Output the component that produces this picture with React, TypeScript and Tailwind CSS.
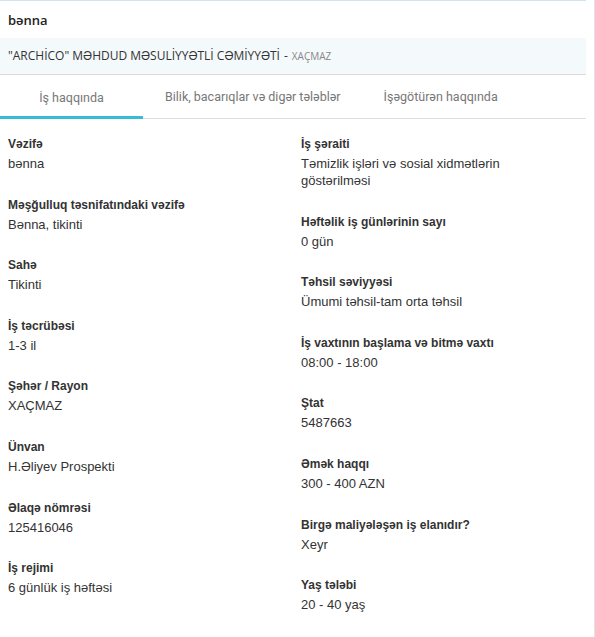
import React from 'react';

const left = [
  ['Vəzifə', 'bənna'],
  ['Məşğulluq təsnifatındaki vəzifə', 'Bənna, tikinti'],
  ['Sahə', 'Tikinti'],
  ['İş təcrübəsi', '1-3 il'],
  ['Şəhər / Rayon', 'XAÇMAZ'],
  ['Ünvan', 'H.Əliyev Prospekti'],
  ['Əlaqə nömrəsi', '125416046'],
  ['İş rejimi', '6 günlük iş həftəsi'],
];

const right = [
  ['İş şəraiti', 'Təmizlik işləri və sosial xidmətlərin göstərilməsi'],
  ['Həftəlik iş günlərinin sayı', '0 gün'],
  ['Təhsil səviyyəsi', 'Ümumi təhsil-tam orta təhsil'],
  ['İş vaxtının başlama və bitmə vaxtı', '08:00 - 18:00'],
  ['Ştat', '5487663'],
  ['Əmək haqqı', '300 - 400 AZN'],
  ['Birgə maliyələşən iş elanıdır?', 'Xeyr'],
  ['Yaş tələbi', '20 - 40 yaş'],
];

function Field({ label, value }: { label: string; value: string }) {
  return (
    <div className="mb-[24.6px]">
      <div className="text-[12px] font-bold leading-[17px] mb-[2px] text-[#333]">{label}</div>
      <div className="text-[13px] leading-[17px] text-[#333] pr-[30px]">{value}</div>
    </div>
  );
}

export default function App() {
  return (
    <div className="w-[595px] h-[637px] bg-white flex flex-col" style={{ fontFamily: '"Liberation Sans", Arial, sans-serif' }}>
      <div className="flex-1 flex border-r border-[#e3e3e3]">
        <div className="w-[586px] border-t border-[#cfe4ec] flex flex-col">
          <div className="h-[37px] flex items-center px-[8px] pt-[2px] text-[13px] font-semibold text-[#222]" style={{ fontFamily: '"Open Sans", sans-serif' }}>
            bənna
          </div>
          <div className="h-[37px] bg-[#f4f9fc] border-b border-[#dcdcdc] flex items-center px-[8px] text-[12px] text-[#333]" style={{ fontFamily: '"Open Sans", sans-serif' }}>
            "ARCHİCO" MƏHDUD MƏSULİYYƏTLİ CƏMİYYƏTİ
            <span className="ml-[4px]">-</span>
            <span className="ml-[4px] text-[10px] text-[#888]">XAÇMAZ</span>
          </div>
          <div className="flex h-[44px] border-b border-[#dedede] text-[12.5px] text-[#777]" style={{ fontFamily: 'Roboto, sans-serif' }}>
            <div className="w-[143px] flex items-center justify-center border-b-[3px] border-[#36bcd6] -mb-px pt-[5px]">İş haqqında</div>
            <div className="px-[22px] flex items-center pt-[2px]">Bilik, bacarıqlar və digər tələblər</div>
            <div className="px-[21px] flex items-center pt-[2px]">İşəgötürən haqqında</div>
          </div>
          <div className="grid grid-cols-2 pl-[8px] pt-[17px]">
            <div>
              {left.map(([l, v]) => (
                <Field key={l} label={l} value={v} />
              ))}
            </div>
            <div className="pl-[4px]">
              {right.map(([l, v]) => (
                <Field key={l} label={l} value={v} />
              ))}
            </div>
          </div>
        </div>
      </div>
      <div className="h-[4px] bg-[#ebebeb]" />
    </div>
  );
}
